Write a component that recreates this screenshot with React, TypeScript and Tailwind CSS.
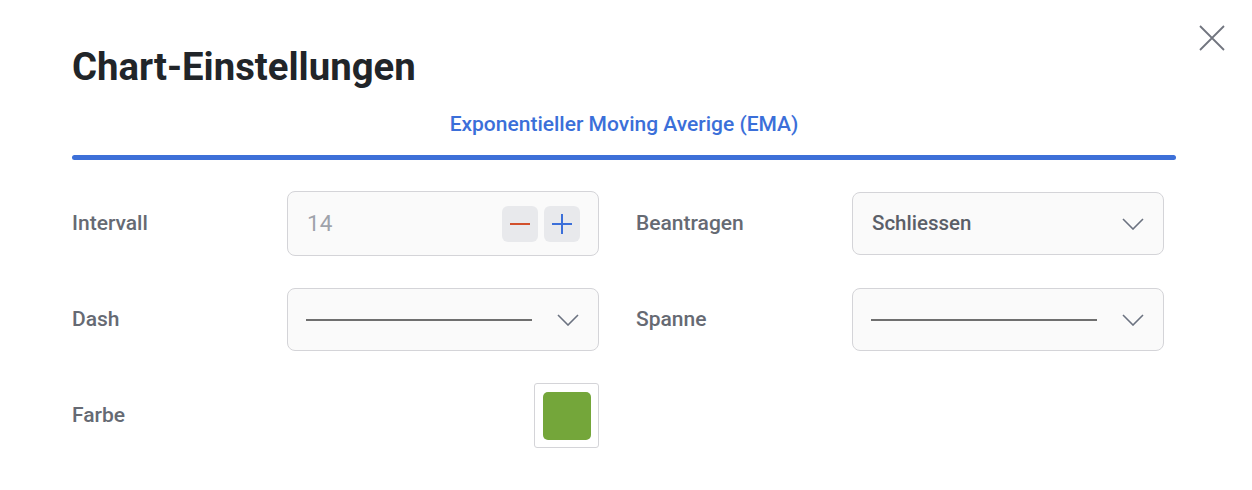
import React from "react";

const Chevron = () => (
  <svg width="22" height="12" viewBox="0 0 22 12" fill="none">
    <path d="M1 1l10 10L21 1" stroke="#6b7280" strokeWidth="1.6" />
  </svg>
);

const LineSelect = () => (
  <div className="flex h-[63px] w-[312px] items-center justify-between rounded-lg border border-[#d4d4d8] bg-[#fafafa] pl-[18px] pr-[19px]">
    <div className="h-[2px] w-[226px] bg-[#6f6f6f]" />
    <Chevron />
  </div>
);

const Label = ({ children, w = "w-[215px]" }: { children: React.ReactNode; w?: string }) => (
  <div className={`${w} text-[21px] font-medium text-[#666a73]`}>{children}</div>
);

export default function App() {
  return (
    <div
      className="relative h-[490px] w-[1252px] bg-white"
      style={{ fontFamily: "Roboto, 'Noto Sans', sans-serif" }}
    >
      <button className="absolute left-[1198px] top-[24px] h-[28px] w-[28px]">
        <svg width="28" height="28" viewBox="0 0 28 28" fill="none">
          <path d="M2 2l24 24M26 2L2 26" stroke="#71757f" strokeWidth="1.8" />
        </svg>
      </button>
      <div className="pl-[72px] pr-[76px] pt-[40px]">
        <h1 className="text-[38.3px] font-bold leading-[54px] text-[#212529]">
          Chart-Einstellungen
        </h1>
        <div className="mt-[17px] flex flex-col items-center">
          <div className="text-[21px] font-medium leading-[26px] text-[#3b6fd9]">
            Exponentieller Moving Averige (EMA)
          </div>
          <div className="mt-[18px] h-[5px] w-full rounded-full bg-[#3d70d8]" />
        </div>
        <div className="mt-[31px] flex flex-col gap-[32px]">
          <div className="flex items-center">
            <div className="flex w-[527px] items-center">
              <Label>Intervall</Label>
              <div className="flex h-[65px] w-[312px] items-center justify-between rounded-lg border border-[#d4d4d8] bg-[#fafafa] pl-[19px] pr-[18px]">
                <span className="text-[22.5px] text-[#9fa3ab]">14</span>
                <div className="flex gap-[6px]">
                  <div className="flex h-[36px] w-[36px] items-center justify-center rounded-md bg-[#e8e9ec]">
                    <div className="h-[2px] w-[20px] bg-[#d2502c]" />
                  </div>
                  <div className="flex h-[36px] w-[36px] items-center justify-center rounded-md bg-[#e8e9ec]">
                    <svg width="22" height="22" viewBox="0 0 22 22">
                      <path d="M11 1v20M1 11h20" stroke="#3b6fd9" strokeWidth="2" />
                    </svg>
                  </div>
                </div>
              </div>
            </div>
            <div className="ml-[37px] flex items-center">
              <Label w="w-[216px]">Beantragen</Label>
              <div className="flex h-[63px] w-[312px] items-center justify-between rounded-lg border border-[#d4d4d8] bg-[#fafafa] pl-[19px] pr-[19px]">
                <span className="text-[20.5px] font-medium text-[#5b5f68]">Schliessen</span>
                <Chevron />
              </div>
            </div>
          </div>
          <div className="flex items-center">
            <div className="flex w-[527px] items-center">
              <Label>Dash</Label>
              <LineSelect />
            </div>
            <div className="ml-[37px] flex items-center">
              <Label w="w-[216px]">Spanne</Label>
              <LineSelect />
            </div>
          </div>
          <div className="flex items-center">
            <div className="flex w-[527px] items-center">
              <Label w="w-[462px]">Farbe</Label>
              <div className="flex h-[65px] w-[65px] items-center justify-center rounded-[3px] border border-[#d4d4d8] bg-white">
                <div className="h-[48px] w-[48px] rounded-[5px] bg-[#74a63a]" />
              </div>
            </div>
          </div>
        </div>
      </div>
    </div>
  );
}
